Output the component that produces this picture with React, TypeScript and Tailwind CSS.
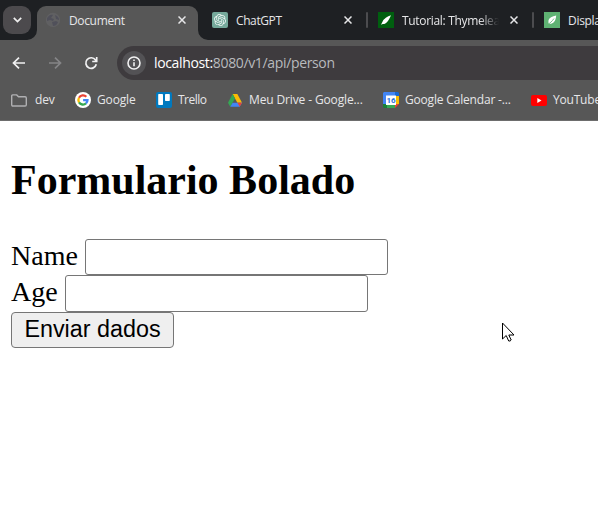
import React from "react";

const ui = "font-['Open_Sans','Noto_Sans',sans-serif]";

function Close() {
  return (
    <svg className="block shrink-0" width="8" height="8" viewBox="0 0 8 8" stroke="#e6e6e8" strokeWidth="1.5" fill="none">
      <path d="M.5.5l7 7M7.5.5l-7 7" />
    </svg>
  );
}

function Globe() {
  return (
    <svg className="block shrink-0" width="16" height="16" viewBox="0 0 16 16">
      <circle cx="8" cy="8" r="7.2" fill="#606062" />
      <path d="M2 6c2-3 4-4 6-3l-2 3 3 1-1 2-3-1-3 1zM10 3c3 1 4 3 4 5l-3-1zM7 10l4-1 2 1c-1 3-3 4-5 4z" fill="#50505a" />
    </svg>
  );
}

function OpenAI() {
  return (
    <svg className="block shrink-0" width="16" height="16" viewBox="0 0 16 16">
      <rect width="16" height="16" rx="2" fill="#75a99b" />
      <path
        transform="translate(2 2) scale(.5)"
        fill="#f1f8f6"
        d="M22.282 9.821a5.985 5.985 0 0 0-.516-4.910 6.046 6.046 0 0 0-6.510-2.900A6.065 6.065 0 0 0 4.981 4.182a5.985 5.985 0 0 0-3.998 2.900 6.046 6.046 0 0 0 .743 7.097 5.980 5.980 0 0 0 .510 4.911 6.051 6.051 0 0 0 6.515 2.900A5.985 5.985 0 0 0 13.260 24a6.056 6.056 0 0 0 5.772-4.206 5.990 5.990 0 0 0 3.998-2.900 6.056 6.056 0 0 0-.748-7.073zM13.260 22.430a4.476 4.476 0 0 1-2.876-1.041l.142-.080 4.778-2.758a.795.795 0 0 0 .393-.682v-6.737l2.020 1.169a.071.071 0 0 1 .038.052v5.582a4.504 4.504 0 0 1-4.495 4.495zM3.600 18.304a4.471 4.471 0 0 1-.535-3.014l.142.085 4.783 2.758a.771.771 0 0 0 .780 0l5.843-3.368v2.332a.080.080 0 0 1-.033.062L9.740 19.950a4.500 4.500 0 0 1-6.140-1.646zM2.340 7.896a4.485 4.485 0 0 1 2.366-1.973v5.677a.766.766 0 0 0 .388.676l5.815 3.355-2.020 1.168a.076.076 0 0 1-.071 0l-4.830-2.786A4.504 4.504 0 0 1 2.340 7.872zm16.597 3.855l-5.833-3.387 2.015-1.164a.076.076 0 0 1 .071 0l4.830 2.791a4.494 4.494 0 0 1-.676 8.105v-5.678a.790.790 0 0 0-.407-.667zm2.010-3.023l-.142-.085-4.773-2.782a.776.776 0 0 0-.785 0L9.409 9.230V6.897a.066.066 0 0 1 .028-.061l4.830-2.787a4.500 4.500 0 0 1 6.680 4.660zm-12.640 4.135l-2.020-1.164a.080.080 0 0 1-.038-.057V6.075a4.500 4.500 0 0 1 7.375-3.453l-.142.080L8.704 5.460a.795.795 0 0 0-.393.682zm1.097-2.365l2.602-1.500 2.607 1.500v2.999l-2.597 1.500-2.607-1.500z"
      />
    </svg>
  );
}

function LeafDark() {
  return (
    <svg className="block shrink-0" width="16" height="16" viewBox="0 0 16 16">
      <rect width="16" height="16" fill="#005f0f" />
      <path d="M13 3.2C9.500 4.200 5.700 6.800 4.600 9.500L3 12.800l1.800-.7c3.400.2 5.700-3.100 8.200-8.900z" fill="#fff" />
    </svg>
  );
}

function LeafLight() {
  return (
    <svg className="block shrink-0" width="16" height="16" viewBox="0 0 16 16">
      <rect width="16" height="16" fill="#5fb273" />
      <path d="M12.200 3.500C8 4.500 5.200 5.500 4.600 8c-.4 1.500.2 2.400-.3 3.600 4.300.7 7.400-1.200 7.900-8.100z" fill="#fff" />
      <path d="M3.800 12.500C6 11 8 9.500 10 6.500" stroke="#5fb273" strokeWidth=".8" fill="none" />
    </svg>
  );
}

function Folder() {
  return (
    <svg className="block shrink-0" width="16" height="13" viewBox="0 0 16 13" fill="none" stroke="#b0b0b2" strokeWidth="1.400">
      <path d="M1.700.900h4l1.800 1.900h6.600q1.200 0 1.200 1.200v6.800q0 1.200-1.200 1.200H1.900Q.700 12 .700 10.800V2Q.700.900 1.700.900z" />
    </svg>
  );
}

function Google() {
  return (
    <svg className="block shrink-0" width="16" height="16" viewBox="0 0 16 16" fill="none" strokeWidth="2.300">
      <circle cx="8" cy="8" r="8" fill="#fff" />
      <path d="M11.300 4.700A4.600 4.600 0 0 0 4 5.700" stroke="#ea4335" />
      <path d="M4 5.700a4.600 4.600 0 0 0 0 4.600" stroke="#fbbc05" />
      <path d="M4 10.300a4.600 4.600 0 0 0 7 1.100" stroke="#34a853" />
      <path d="M11 11.400q1.500-1.400 1.500-3.300H8.100" stroke="#4285f4" />
    </svg>
  );
}

function Trello() {
  return (
    <svg className="block shrink-0" width="16" height="16" viewBox="0 0 16 16">
      <rect width="16" height="16" rx="2" fill="#0079bf" />
      <rect x="2.200" y="2" width="4.800" height="11" rx=".7" fill="#fff" />
      <rect x="9" y="2" width="4.800" height="7" rx=".7" fill="#fff" />
    </svg>
  );
}

function Drive() {
  return (
    <svg className="mx-px block shrink-0" width="14" height="13" viewBox="0 0 16 14" preserveAspectRatio="none">
      <path d="M5.300 0h5.400L8 4.800z" fill="#188038" />
      <path d="M10.700 0L16 9.300h-5.300L5.300 0z" fill="#fbbc04" />
      <path d="M5.300 0L8 4.800 2.600 13.800 0 9.300z" fill="#34a853" />
      <path d="M5.300 9.300H16l-2.600 4.500H2.600z" fill="#4285f4" />
      <path d="M10.700 9.300H16l-2.600 4.500z" fill="#ea4335" />
    </svg>
  );
}

function Calendar() {
  return (
    <svg className="block shrink-0" width="16" height="16" viewBox="0 0 16 16">
      <path d="M1 0h11v4H4v8H0V1z" fill="#4285f4" />
      <path d="M12 0h3l1 1v3h-4z" fill="#1967d2" />
      <path d="M12 4h4v8h-4z" fill="#fbbc04" />
      <path d="M0 12h4v4H1l-1-1z" fill="#188038" />
      <path d="M4 12h8v4H4z" fill="#34a853" />
      <path d="M12 12h4l-4 4z" fill="#ea4335" />
      <path d="M3 3.500h10v9.500H3z" fill="#fff" />
      <text x="8" y="11.200" textAnchor="middle" fontSize="8" fontWeight="700" fontFamily="Roboto, sans-serif" fill="#2870d8">16</text>
    </svg>
  );
}

function YouTube() {
  return (
    <svg className="block shrink-0" width="16" height="11" viewBox="0 0 16 11">
      <rect width="16" height="11" rx="2" fill="#f00" />
      <path d="M6.300 3l4.200 2.500L6.300 8z" fill="#fff" />
    </svg>
  );
}

export default function App() {
  return (
    <div className="relative h-[520px] w-[598px] overflow-hidden bg-white">
      <header className={`${ui} flex h-[121px] flex-col border-b border-[#6d6d6d] bg-[#575757] text-[12px] text-[#e6e6e8]`}>
        <div className="flex h-10 shrink-0 bg-[#1e2023]">
          <div className="w-[37px] shrink-0 pl-[3px] pt-[6px]">
            <div className="flex h-7 w-7 items-center justify-center rounded-[9px] bg-[#4c4a4d]">
              <svg width="9" height="6" viewBox="0 0 9 6" fill="none" stroke="#eee" strokeWidth="1.700"><path d="M.8.800l3.700 3.700L8.200.800" /></svg>
            </div>
          </div>
          <div className="relative mt-[6px] flex h-[34px] w-[161px] shrink-0 items-center rounded-t-[9px] bg-[#575757] pb-[6px] pl-2 pr-[12px]">
            <svg className="absolute -left-[10px] bottom-0" width="10" height="10"><path d="M10 0v10H0A10 10 0 0 0 10 0" fill="#575757" /></svg>
            <svg className="absolute -right-[10px] bottom-0" width="10" height="10"><path d="M0 0v10h10A10 10 0 0 1 0 0" fill="#575757" /></svg>
            <Globe />
            <span className="ml-2 w-[104px] whitespace-nowrap pt-px tracking-[-0.350px]">Document</span>
            <span className="ml-auto"><Close /></span>
          </div>
          <div className="flex h-10 w-[168px] shrink-0 items-center pl-[14px] pr-[14px]">
            <OpenAI />
            <span className="ml-2 whitespace-nowrap pt-px tracking-[-0.400px]">ChatGPT</span>
            <span className="ml-auto"><Close /></span>
          </div>
          <div className="flex h-10 w-[166px] shrink-0 items-center">
            <div className="h-4 w-[2px] rounded bg-[#4c4c4f]" />
            <div className="ml-[10px]"><LeafDark /></div>
            <span className="ml-2 w-[97px] overflow-hidden whitespace-nowrap pt-px tracking-[-0.320px] [mask-image:linear-gradient(to_right,black_80%,transparent)]">Tutorial: Thymeleaf</span>
            <span className="ml-auto mr-[14px]"><Close /></span>
          </div>
          <div className="flex h-10 w-[66px] items-center overflow-hidden">
            <div className="h-4 w-[2px] shrink-0 rounded bg-[#4c4c4f]" />
            <div className="ml-[10px]"><LeafLight /></div>
            <span className="ml-2 whitespace-nowrap pt-px tracking-[-0.300px]">Displaying</span>
          </div>
        </div>
        <div className="flex h-10 shrink-0 pt-[6px]">
          <div className="flex h-[34px] w-[117px] shrink-0 items-center pl-[12px]">
            <svg width="14" height="12" viewBox="0 0 14 12" fill="none" stroke="#f1f1f2" strokeWidth="1.700"><path d="M7 .700L1.500 6 7 11.300M1.500 6H13" /></svg>
            <svg className="ml-[22px]" width="14" height="12" viewBox="0 0 14 12" fill="none" stroke="#858587" strokeWidth="1.700"><path d="M7 .700L12.500 6 7 11.300M12.500 6H1" /></svg>
            <svg className="ml-[22px]" width="14" height="14" viewBox="0 0 14 14" fill="none" stroke="#f1f1f2" strokeWidth="1.700"><path d="M12.300 8.300a5.300 5.300 0 1 1-.8-4.300l1 1.300M12.700 1v4.500H8.200" /></svg>
          </div>
          <div className="flex h-[34px] flex-1 items-center rounded-l-full bg-[#3e3b3e] pl-[5px]">
            <div className="flex h-6 w-6 items-center justify-center rounded-full bg-[#535255]">
              <svg width="14" height="14" viewBox="0 0 14 14" fill="none" stroke="#f1f1f2" strokeWidth="1.600"><circle cx="7" cy="7" r="6" /><path d="M7 6.200v4M7 3.500v1.600" /></svg>
            </div>
            <span className="ml-2 whitespace-nowrap pb-[2px] text-[14px] tracking-[-0.350px] text-[#b8babd]"><span className="text-white">localhost:</span>8080/v1/api/person</span>
          </div>
        </div>
        <div className="flex h-10 shrink-0 items-center overflow-hidden whitespace-nowrap pl-[11px]">
          <div className="flex w-[64px] shrink-0 items-center gap-2"><Folder /><span className="tracking-[-0.200px]">dev</span></div>
          <div className="flex w-[81px] shrink-0 items-center gap-[6px]"><Google /><span className="tracking-[-0.150px]">Google</span></div>
          <div className="flex w-[71px] shrink-0 items-center gap-[6px]"><Trello /><span className="tracking-[-0.500px]">Trello</span></div>
          <div className="flex w-[156px] shrink-0 items-center gap-[6px]"><Drive /><span className="tracking-[-0.130px]">Meu Drive - Google...</span></div>
          <div className="flex w-[148px] shrink-0 items-center gap-[6px]"><Calendar /><span className="tracking-[-0.180px]">Google Calendar -...</span></div>
          <div className="flex shrink-0 items-center gap-[6px]"><YouTube /><span className="tracking-[-0.200px]">YouTube</span></div>
        </div>
      </header>
      <main className="flex flex-col items-start pl-[11px] pt-[35px] font-['Liberation_Serif',serif] text-[28px] text-black">
        <h2 className="h-[83px] whitespace-nowrap text-[42px] font-bold leading-[48px]">Formulario Bolado</h2>
        <label className="flex h-9 whitespace-nowrap leading-[33px]">
          <span className="w-[74px]">Name</span>
          <input className="h-9 w-[303px] rounded-[3px] border border-[#767676] bg-white px-1 outline-none" />
        </label>
        <label className="flex h-[37px] whitespace-nowrap leading-[33px]">
          <span className="w-[54px]">Age</span>
          <input className="h-[37px] w-[303px] rounded-[3px] border border-[#767676] bg-white px-1 outline-none" />
        </label>
        <button className="h-9 w-[163px] whitespace-nowrap rounded-[4px] border border-[#767676] bg-[#efefef] pb-[2px] font-['Liberation_Sans',sans-serif] text-[23.330px] leading-[32px]">Enviar dados</button>
      </main>
      <svg className="absolute left-[502px] top-[322px]" width="13" height="21" viewBox="0 0 13 21" fill="white" stroke="black" strokeWidth="1">
        <path d="M.5 1v16l3.700-3.500 2.500 5.500q1.500.500 2.500-1l-2.400-5H12z" />
      </svg>
    </div>
  );
}
